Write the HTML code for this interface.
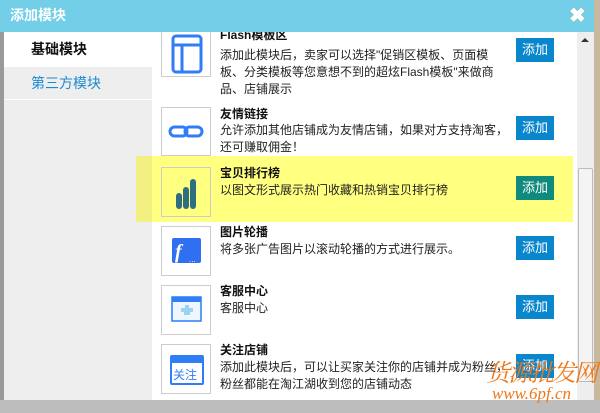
<!DOCTYPE html>
<html><head><meta charset="utf-8"><style>
*{margin:0;padding:0;box-sizing:border-box}
html,body{width:600px;height:413px;overflow:hidden}
body{background:#9a9a9a;font-family:"Liberation Sans","Noto Sans CJK SC",sans-serif;position:relative;font-size:12px}
.hd{position:absolute;left:0;top:0;width:594px;height:32px;background:#73cfe8;color:#fff;font-weight:bold;font-size:14px;line-height:31px;padding-left:10px}
.x{position:absolute;left:569px;top:3px;color:#fff;font-size:20px;font-weight:bold;text-shadow:0 0 1px #888}
.side{position:absolute;left:4px;top:32px;width:148px;height:368px;background:#eee}
.t1{height:35px;background:#fff;font-weight:bold;font-size:14px;line-height:34px;padding-left:27px;color:#111}
.t2{height:33px;border-bottom:1px solid #fff;color:#1a8ad0;font-size:14px;line-height:32px;padding-left:27px}
.main{position:absolute;left:152px;top:32px;width:425px;height:368px;background:#fff;overflow:hidden}
.in{position:absolute;left:0;top:-32px;width:425px;height:400px}
.sb{position:absolute;left:577px;top:32px;width:17px;height:368px;background:#eee}
.thumb{position:absolute;left:578px;top:168px;width:15px;height:214px;background:#f4f4f4;border:1px solid #bbb;border-radius:2px}
.fr{position:absolute;left:594px;top:0;width:6px;height:413px;background:#c9b8a0}
.bot{position:absolute;left:0;top:400px;width:600px;height:13px;background:#bdbdbd}
.ic{position:absolute;left:9px;width:50px;height:50px;border:1px solid #ccc;background:#fff}
.tt{position:absolute;left:68px;font-weight:bold;font-size:12px;color:#111;white-space:nowrap;line-height:14px}
.ds{position:absolute;left:68px;line-height:17px;color:#222;font-size:12px;white-space:nowrap}
.bt{position:absolute;left:364px;width:38px;height:24px;background:#0a86cd;color:#fff;font-size:13px;line-height:24px;text-align:center}
.hl{position:absolute;left:0;top:156px;width:421px;height:66px;background:#ffff80}
.wm{position:absolute;color:#f07818;font-style:italic;white-space:nowrap}
</style></head><body>
<div class="hd">添加模块</div><div class="x">✖</div>
<div class="side"><div class="t1">基础模块</div><div class="t2">第三方模块</div></div>
<div style="position:absolute;left:136px;top:156px;width:16px;height:66px;background:#f2f080"></div>
<div class="main"><div class="in">
 <div class="ic" style="top:19px;height:58px"><svg width="48" height="56"><rect x="11" y="16" width="28" height="36" rx="3" fill="none" stroke="#2f7ef5" stroke-width="3"/><line x1="11" y1="25" x2="39" y2="25" stroke="#2f7ef5" stroke-width="3"/><line x1="20" y1="25" x2="20" y2="52" stroke="#2f7ef5" stroke-width="3"/></svg></div>
 <div class="tt" style="top:28px">Flash模板区</div>
 <div class="ds" style="top:47px">添加此模块后，卖家可以选择"促销区模板、页面模<br>板、分类模板等您意想不到的超炫Flash模板"来做商<br>品、店铺展示</div>
 <div class="bt" style="top:38px">添加</div>

 <div class="ic" style="top:107px;height:49px"><svg width="48" height="48"><rect x="8" y="19" width="17" height="9" rx="4.5" fill="none" stroke="#2f7ef5" stroke-width="3"/><rect x="23" y="19" width="17" height="9" rx="4.5" fill="none" stroke="#2f7ef5" stroke-width="3"/></svg></div>
 <div class="tt" style="top:107px">友情链接</div>
 <div class="ds" style="top:122px">允许添加其他店铺成为友情店铺，如果对方支持淘客，<br>还可赚取佣金！</div>
 <div class="bt" style="top:116px">添加</div>

 <div class="hl"></div>
 <div class="ic" style="top:167px;background:#ffff80"><svg width="48" height="48"><rect x="14" y="25" width="6" height="16" rx="3" fill="#2e6e7e"/><rect x="21" y="19" width="6" height="22" rx="3" fill="#2e6e7e"/><rect x="28" y="11" width="6" height="30" rx="3" fill="#2e6e7e"/></svg></div>
 <div class="tt" style="top:166px">宝贝排行榜</div>
 <div class="ds" style="top:182px">以图文形式展示热门收藏和热销宝贝排行榜</div>
 <div class="bt" style="top:176px;background:#118a7e">添加</div>

 <div class="ic" style="top:226px"><svg width="48" height="48"><rect x="10" y="11" width="29" height="25" rx="2" fill="#2f6ff2"/><text x="13" y="31" fill="#fff" font-size="20" font-style="italic" font-weight="bold" font-family="Liberation Serif,serif">f</text><text x="27" y="35" fill="#fff" font-size="8">...</text></svg></div>
 <div class="tt" style="top:225px">图片轮播</div>
 <div class="ds" style="top:241px">将多张广告图片以滚动轮播的方式进行展示。</div>
 <div class="bt" style="top:236px">添加</div>

 <div class="ic" style="top:285px"><svg width="48" height="48"><rect x="10" y="11" width="29" height="24" fill="#eef6ff" stroke="#2f7ef5" stroke-width="1.5"/><rect x="10" y="11" width="29" height="5" fill="#2f7ef5"/><path d="M19 22h4v-3h4v3h4v4h-3v3h-6v-3h-3z" fill="#9cd3f0"/></svg></div>
 <div class="tt" style="top:284px">客服中心</div>
 <div class="ds" style="top:300px">客服中心</div>
 <div class="bt" style="top:295px">添加</div>

 <div class="ic" style="top:344px"><svg width="48" height="48"><rect x="8" y="10" width="34" height="30" rx="2" fill="#2f7ef5"/><rect x="10" y="18" width="30" height="20" fill="#fff"/><text x="11" y="34" fill="#2f7ef5" font-size="12" font-family="Noto Sans CJK SC,sans-serif">关注</text></svg></div>
 <div class="tt" style="top:343px">关注店铺</div>
 <div class="ds" style="top:359px">添加此模块后，可以让买家关注你的店铺并成为粉丝，<br>粉丝都能在淘江湖收到您的店铺动态</div>
 <div class="bt" style="top:354px">添加</div>
</div></div>
<div class="sb"></div><div class="thumb"></div>
<div style="position:absolute;left:581px;top:38px;width:0;height:0;border:4px solid transparent;border-bottom-color:#333;border-top:0"></div>
<div class="fr"></div><div class="bot"></div>
<div class="wm" style="left:486px;top:357px;font-size:24px;letter-spacing:-2px;font-family:'Noto Serif CJK SC',serif;line-height:28px">货源批发网</div>
<div class="wm" style="left:492px;top:384px;font-size:17px;font-family:'Liberation Serif',serif;line-height:20px">www.6pf.cn</div>
</body></html>
